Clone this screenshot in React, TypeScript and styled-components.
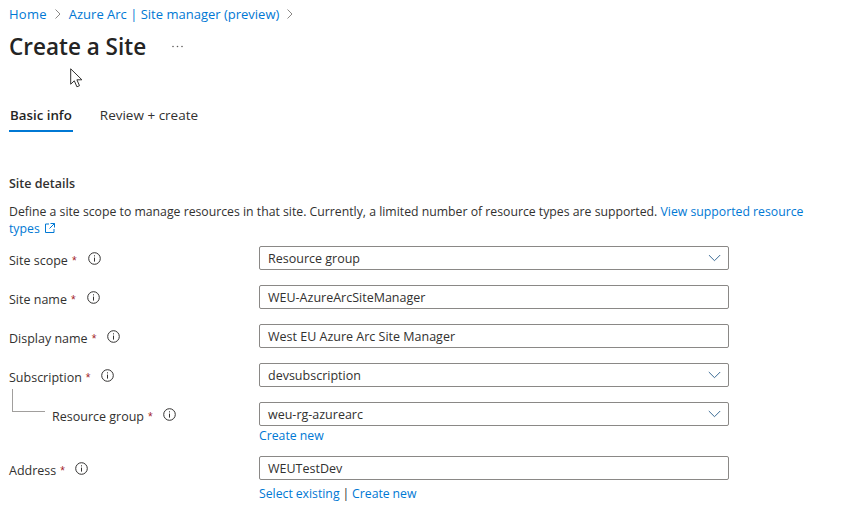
import React from "react";
import styled, { createGlobalStyle } from "styled-components";

const Global = createGlobalStyle`
  html, body { margin: 0; padding: 0; background: #fff; }
  body { font-family: "Open Sans", "Noto Sans", sans-serif; font-size: 12.5px; color: #323130; }
  * { box-sizing: border-box; }
`;

const Page = styled.div`
  position: relative;
  width: 841px;
  height: 526px;
  overflow: hidden;
  padding: 5px 0 0 9px;
`;

const Crumbs = styled.nav`
  display: flex;
  align-items: center;
  height: 18px;
  gap: 7px;
  font-size: 13px;
`;

const Link = styled.a`
  color: #0078d4;
  text-decoration: none;
`;

const CrumbLink = styled(Link)`
  white-space: nowrap;
  letter-spacing: 0.02em;
`;

const Chevron = styled.svg`
  width: 8px;
  height: 10px;
  fill: none;
  stroke: #8a8886;
  stroke-width: 1;
`;

const TitleRow = styled.div`
  display: flex;
  align-items: center;
  height: 30px;
  margin-top: 9px;
  gap: 25px;
`;

const Title = styled.h1`
  margin: 0;
  font-size: 22.5px;
  font-weight: 600;
  line-height: 30px;
  color: #242424;
`;

const More = styled.svg`
  width: 13px;
  height: 3px;
  fill: #605e5c;
  margin-top: -2px;
`;

const Cursor = styled.svg`
  position: absolute;
  left: 70px;
  top: 68px;
  width: 13px;
  height: 20px;
`;

const Tabs = styled.div`
  display: flex;
  margin-top: 44px;
  height: 26px;
  gap: 26px;
`;

const Tab = styled.div<{ $active?: boolean }>`
  padding: 0 1px;
  height: 26px;
  line-height: 18px;
  font-size: ${(p) => (p.$active ? "13.3px" : "13.5px")};
  font-weight: ${(p) => (p.$active ? 600 : 400)};
  color: ${(p) => (p.$active ? "#242424" : "#323130")};
  border-bottom: ${(p) => (p.$active ? "2px solid #0078d4" : "2px solid transparent")};
`;

const SectionTitle = styled.h2`
  margin: 43px 0 0;
  font-size: 12.5px;
  font-weight: 600;
  line-height: 18px;
  color: #323130;
`;

const Description = styled.p`
  margin: 10px 0 0;
  width: 810px;
  font-size: 12.25px;
  line-height: 17px;
  color: #323130;
`;

const External = styled.svg`
  width: 10px;
  height: 10px;
  margin-left: 5px;
  fill: none;
  stroke: #0078d4;
  stroke-width: 1;
`;

const Form = styled.div`
  display: flex;
  flex-direction: column;
  margin-top: 9px;
  gap: 15px;
`;

const Row = styled.div`
  display: grid;
  grid-template-columns: 250px 470px;
`;

const Label = styled.label<{ $nested?: boolean }>`
  display: flex;
  align-items: center;
  position: relative;
  height: 24px;
  padding-top: 5px;
  padding-left: ${(p) => (p.$nested ? "43px" : "0")};
`;

const Star = styled.span`
  color: #a4262c;
  margin-left: 4px;
  font-family: "Liberation Sans", sans-serif;
  font-size: 12px;
`;

const Info = styled.svg<{ $gap: number }>`
  width: 13px;
  height: 13px;
  margin-left: ${(p) => p.$gap}px;
  margin-top: -5px;
  fill: none;
  stroke: #323130;
`;

const Connector = styled.span`
  position: absolute;
  left: 3px;
  top: -13px;
  width: 33px;
  height: 23px;
  border-left: 1px solid #a19f9d;
  border-bottom: 1px solid #a19f9d;
`;

const Control = styled.div`
  display: flex;
  flex-direction: column;
`;

const Field = styled.div`
  display: flex;
  align-items: center;
  justify-content: space-between;
  height: 24px;
  padding: 0 7px 0 8px;
  border: 1px solid #8a8886;
  border-radius: 2px;
  background: #fff;
  font-size: 12.5px;
  color: #323130;
`;

const Caret = styled.svg`
  width: 13px;
  height: 8px;
  fill: none;
  stroke: #3a6a94;
  stroke-width: 1;
`;

const Hint = styled.div`
  margin-top: 1px;
  height: 14px;
  line-height: 17px;
  font-size: 12.25px;
`;

const HintWide = styled.div`
  margin-top: 5px;
  height: 17px;
  line-height: 17px;
  font-size: 12.25px;
  word-spacing: -0.3px;
`;

const Bar = styled.span`
  color: #323130;
`;

const InfoIcon = ({ gap }: { gap: number }) => (
  <Info $gap={gap} viewBox="0 0 13 13">
    <circle cx="6.5" cy="6.5" r="5.8" />
    <path d="M6.5 5.6v4" />
    <path d="M6.5 3.3v1.1" />
  </Info>
);

const Sep = () => (
  <Chevron viewBox="0 0 8 10">
    <path d="M1.5.5 6 5 1.5 9.5" />
  </Chevron>
);

const Select = ({ value }: { value: string }) => (
  <Field>
    {value}
    <Caret viewBox="0 0 13 8">
      <path d="M.8 1l5.7 5.7L12.2 1" />
    </Caret>
  </Field>
);

export default function App() {
  return (
    <Page>
      <Global />
      <Crumbs>
        <CrumbLink>Home</CrumbLink>
        <Sep />
        <Link>Azure Arc | Site manager (preview)</Link>
        <Sep />
      </Crumbs>
      <TitleRow>
        <Title>Create a Site</Title>
        <More viewBox="0 0 13 3">
          <circle cx="2" cy="1.5" r=".8" />
          <circle cx="6.5" cy="1.5" r=".8" />
          <circle cx="11" cy="1.5" r=".8" />
        </More>
      </TitleRow>
      <Cursor viewBox="0 0 13 20">
        <path d="M.7.8v15.4l3.6-3.4 2.6 6 2.6-1.1-2.6-5.9h5z" fill="#fff" stroke="#323130" strokeWidth="1" />
      </Cursor>
      <Tabs>
        <Tab $active>Basic info</Tab>
        <Tab>Review + create</Tab>
      </Tabs>
      <SectionTitle>Site details</SectionTitle>
      <Description>
        Define a site scope to manage resources in that site. Currently, a limited number of resource types are
        supported. <Link>View supported resource</Link>
        <br />
        <Link>types</Link>
        <External viewBox="0 0 10 10">
          <path d="M4 1H.5v8.5H9V6M5.5.5h4v4M9.5.5 4.5 5.5" />
        </External>
      </Description>
      <Form>
        <Row>
          <Label>Site scope<Star>*</Star><InfoIcon gap={11} /></Label>
          <Select value="Resource group" />
        </Row>
        <Row>
          <Label>Site name<Star>*</Star><InfoIcon gap={11} /></Label>
          <Field>WEU-AzureArcSiteManager</Field>
        </Row>
        <Row>
          <Label>Display name<Star>*</Star><InfoIcon gap={11} /></Label>
          <Field>West EU Azure Arc Site Manager</Field>
        </Row>
        <Row>
          <Label>Subscription<Star>*</Star><InfoIcon gap={10} /></Label>
          <Select value="devsubscription" />
        </Row>
        <Row>
          <Label $nested>
            <Connector />
            Resource group<Star>*</Star><InfoIcon gap={10} />
          </Label>
          <Control>
            <Select value="weu-rg-azurearc" />
            <Hint><Link>Create new</Link></Hint>
          </Control>
        </Row>
        <Row>
          <Label>Address<Star>*</Star><InfoIcon gap={10} /></Label>
          <Control>
            <Field>WEUTestDev</Field>
            <HintWide><Link>Select existing</Link> <Bar>|</Bar> <Link>Create new</Link></HintWide>
          </Control>
        </Row>
      </Form>
    </Page>
  );
}
